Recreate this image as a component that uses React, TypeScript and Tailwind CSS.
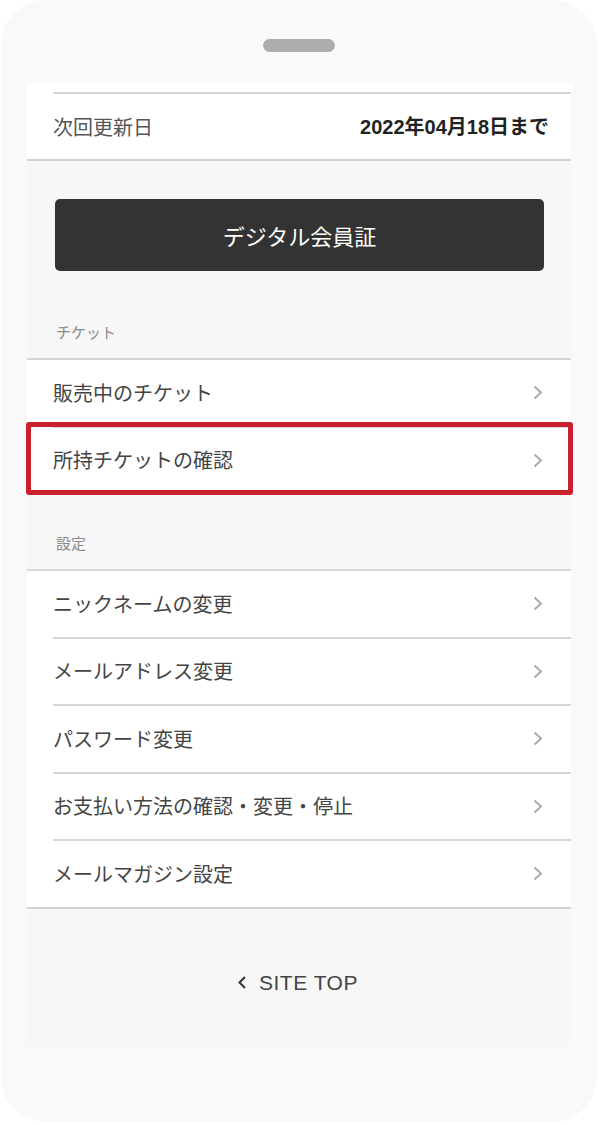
import * as React from "react";

const jp = "font-['Noto_Sans_CJK_JP',sans-serif]";

function Chevron() {
  return (
    <svg width="10" height="15" viewBox="0 0 10 15" className="shrink-0">
      <polyline points="1.5,1.5 8,7.5 1.5,13.5" fill="none" stroke="#ababab" strokeWidth="2" />
    </svg>
  );
}

function MenuRow({
  label,
  first,
  highlight,
}: {
  label: string;
  first?: boolean;
  highlight?: boolean;
}) {
  return (
    <div className="relative bg-white pl-[26px]">
      <div className={first ? "" : "border-t-2 border-[#d6d6d6]"}>
        <div className="flex h-[65.5px] items-center justify-between pr-[28px]">
          <span className="text-[20px] leading-none text-[#444]">{label}</span>
          <Chevron />
        </div>
      </div>
      {highlight && (
        <div className="pointer-events-none absolute -top-[4px] -bottom-[2px] -left-[1px] -right-[2px] rounded-[3px] border-[5px] border-[#c8202d]" />
      )}
    </div>
  );
}

function Section({ title, items, highlightIndex }: { title: string; items: string[]; highlightIndex?: number }) {
  return (
    <div>
      <div className="mb-[16px] h-[20px] pl-[29px] text-[15px] leading-[20px] text-[#8a8a8a]">{title}</div>
      <div className="border-t-2 border-[#d6d6d6]">
        {items.map((item, i) => (
          <MenuRow key={item} label={item} first={i === 0} highlight={i === highlightIndex} />
        ))}
      </div>
    </div>
  );
}

export default function App() {
  return (
    <div className={`h-[1125px] w-[599px] bg-white ${jp}`}>
      <div className="ml-[1px] flex h-[1122px] w-[596px] flex-col items-center rounded-[45px] bg-[#f9f9f9]">
        {/* speaker */}
        <div className="mt-[39px] h-[13px] w-[72px] rounded-full bg-[#adadad]" />

        {/* screen */}
        <div className="mt-[31px] flex h-[964px] w-[544px] flex-col self-start ml-[26px] bg-[#f7f7f7]">
          {/* renewal row */}
          <div className="border-b-2 border-[#d2d2d2] bg-white pt-[9px]">
            <div className="ml-[26px] border-t-2 border-[#d6d6d6]">
              <div className="flex h-[65px] items-center justify-between pr-[22px]">
                <span className="text-[20px] leading-none text-[#555]">次回更新日</span>
                <span className="font-['Liberation_Sans','Noto_Sans_CJK_JP',sans-serif] text-[20px] font-bold leading-none text-[#222]">
                  2022年04月18日まで
                </span>
              </div>
            </div>
          </div>

          {/* digital card button */}
          <button className="ml-[28px] mr-[27px] mt-[38px] flex h-[72px] items-center justify-center rounded-[5px] bg-[#333333] text-[22px] text-white">
            デジタル会員証
          </button>

          <div className="mt-[51px]">
            <Section title="チケット" items={["販売中のチケット", "所持チケットの確認"]} highlightIndex={1} />
          </div>

          <div className="mt-[40px]">
            <Section
              title="設定"
              items={[
                "ニックネームの変更",
                "メールアドレス変更",
                "パスワード変更",
                "お支払い方法の確認・変更・停止",
                "メールマガジン設定",
              ]}
            />
            <div className="border-t-2 border-[#d2d2d2]" />
          </div>

          {/* site top */}
          <div className="mt-[62px] flex h-[24px] items-center justify-center gap-[12px] pr-[2px]">
            <svg width="9" height="13" viewBox="0 0 9 13">
              <polyline points="7,1 1.5,6.5 7,12" fill="none" stroke="#333" strokeWidth="2" />
            </svg>
            <span className="font-['Liberation_Sans',sans-serif] text-[21px] leading-none tracking-[0.5px] text-[#444]">
              SITE TOP
            </span>
          </div>
        </div>
      </div>
    </div>
  );
}
